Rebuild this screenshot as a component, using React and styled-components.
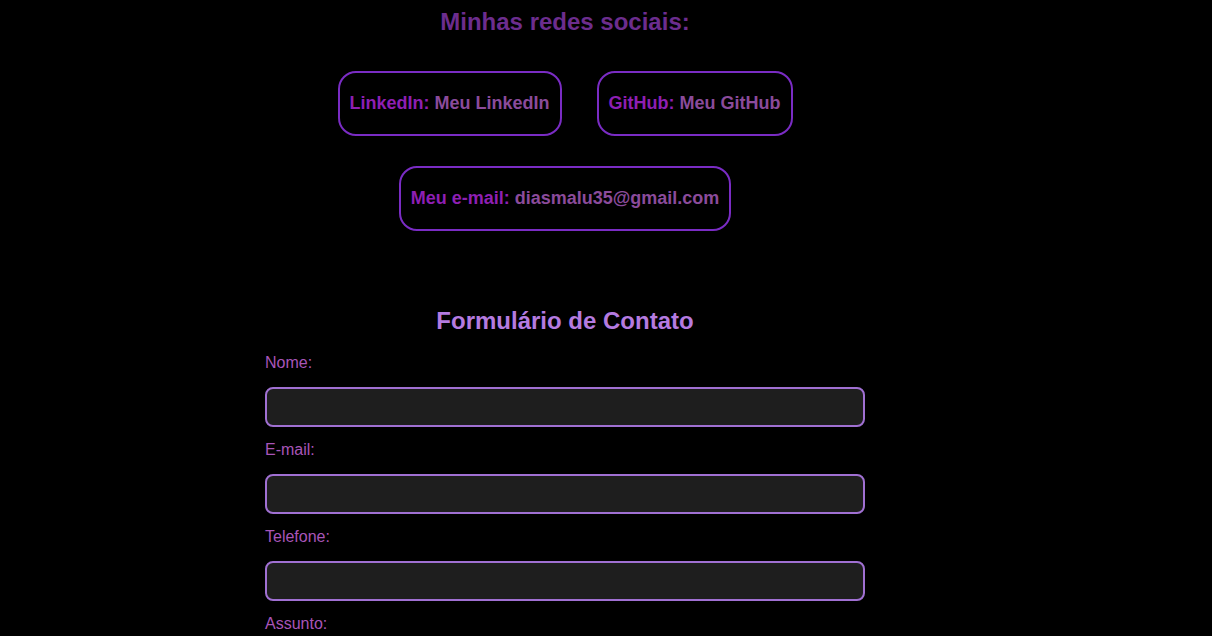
import React from "react";
import styled, { createGlobalStyle } from "styled-components";

const Global = createGlobalStyle`
  html, body { background: #000; }
  body {
    margin: 0 8px;
    font-family: "Liberation Sans", Arial, sans-serif;
    color: #a855b8;
  }
`;

const Main = styled.main`
  width: 1114px;
  display: flex;
  flex-direction: column;
  align-items: center;
`;

const SectionTitle = styled.h2`
  margin: 8px 0 0;
  font-size: 24px;
  line-height: 28px;
  font-weight: bold;
  color: ${(p) => p.$color};
  text-align: center;
`;

const SocialList = styled.ul`
  list-style: none;
  margin: 35px 0 0;
  padding: 0;
  width: 520px;
  display: flex;
  flex-wrap: wrap;
  justify-content: center;
  column-gap: 35px;
  row-gap: 30px;
`;

const SocialCard = styled.li`
  border: 2px solid #7a2cc4;
  border-radius: 18px;
  padding: 0 10px;
  height: 65px;
  box-sizing: border-box;
  display: flex;
  align-items: center;
  font-size: 18px;
  font-weight: bold;
`;

const SocialLabel = styled.span`
  color: #8e1fb3;
  margin-right: 5px;
`;

const SocialLink = styled.a`
  color: #8b4b9b;
  text-decoration: none;
`;

const Form = styled.form`
  margin-top: 76px;
  width: 600px;
  display: flex;
  flex-direction: column;
`;

const FormTitle = styled(SectionTitle)`
  margin: 0 0 19px;
`;

const Label = styled.label`
  font-size: 16px;
  line-height: 18px;
  color: #a855b8;
  margin-bottom: 15px;
`;

const Input = styled.input`
  box-sizing: border-box;
  width: 600px;
  height: 40px;
  background: #1e1e1e;
  border: 2px solid #a070d2;
  border-radius: 8px;
  margin: 0 0 14px;
  color: #ddd;
  font-size: 16px;
  padding: 0 10px;
  outline: none;
`;

const socials = [
  { label: "LinkedIn:", text: "Meu LinkedIn" },
  { label: "GitHub:", text: "Meu GitHub" },
  { label: "Meu e-mail:", text: "diasmalu35@gmail.com" },
];

const fields = [
  { id: "nome", label: "Nome:" },
  { id: "email", label: "E-mail:" },
  { id: "telefone", label: "Telefone:" },
  { id: "assunto", label: "Assunto:" },
];

export default function App() {
  return (
    <>
      <Global />
      <Main>
        <SectionTitle $color="#6c2d8e">Minhas redes sociais:</SectionTitle>
        <SocialList>
          {socials.map((s) => (
            <SocialCard key={s.label}>
              <SocialLabel>{s.label}</SocialLabel>
              <SocialLink href="#">{s.text}</SocialLink>
            </SocialCard>
          ))}
        </SocialList>
        <Form onSubmit={(e) => e.preventDefault()}>
          <FormTitle $color="#b57be0">Formulário de Contato</FormTitle>
          {fields.map((f) => (
            <React.Fragment key={f.id}>
              <Label htmlFor={f.id}>{f.label}</Label>
              <Input id={f.id} type="text" />
            </React.Fragment>
          ))}
        </Form>
      </Main>
    </>
  );
}
